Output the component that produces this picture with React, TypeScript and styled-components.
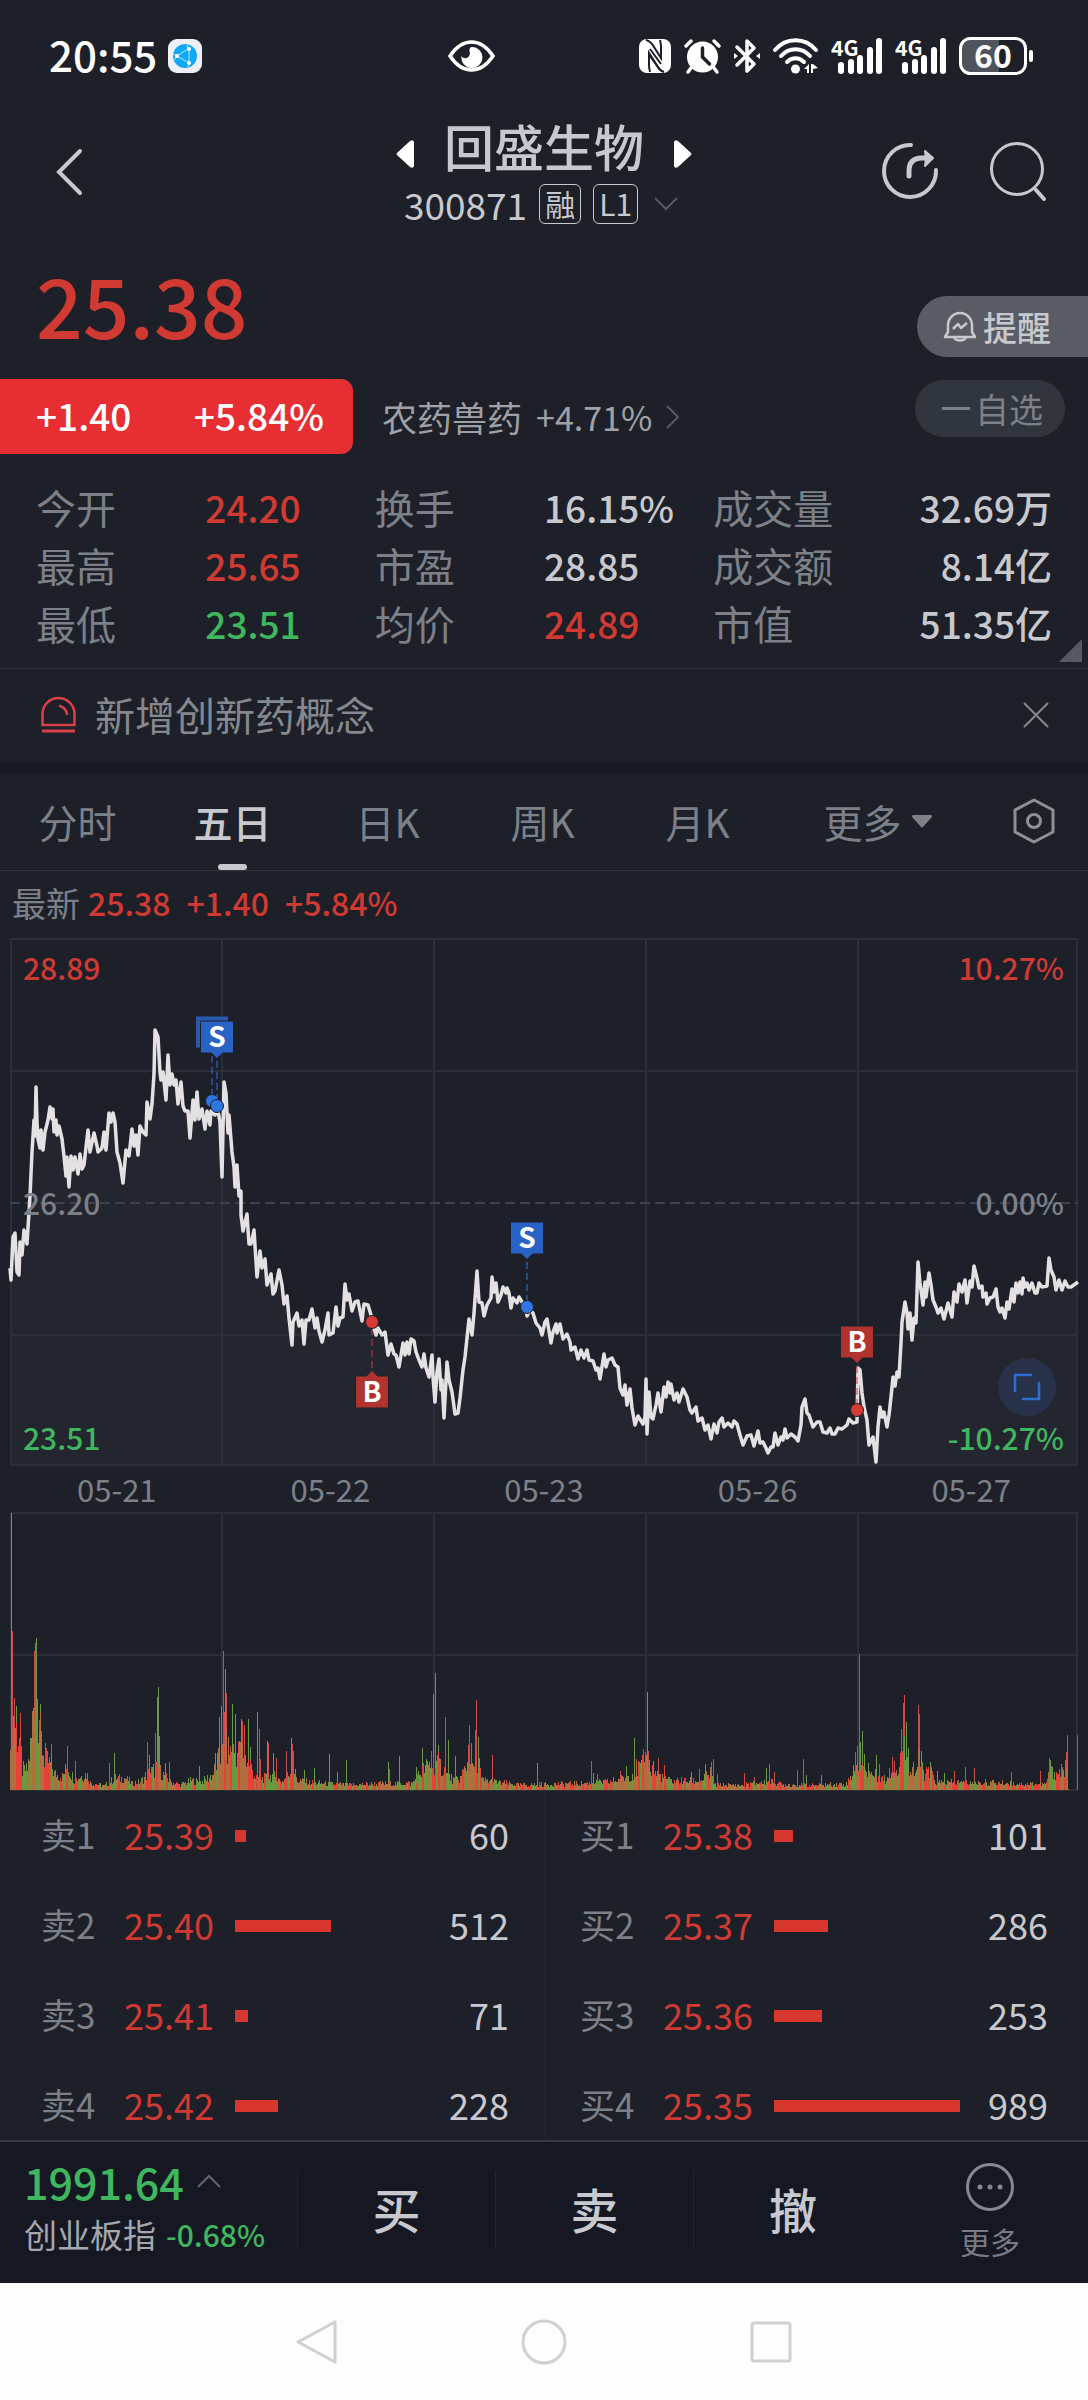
import React, { useCallback, useState } from "react";
import styled, { createGlobalStyle, css } from "styled-components";

const colors = {
  page: "#1d2028",
  band: "#181b26",
  bar: "#151823",
  line: "#2b2f39",
  text: "#c8c9ce",
  muted: "#7c8088",
  red: "#d03a33",
  green: "#3fb75e",
  blue: "#2a63c6",
};

const GlobalStyle = createGlobalStyle`
  * {
    box-sizing: border-box;
  }

  body {
    margin: 0;
    background: ${colors.page};
    color: ${colors.text};
    font-family: "Noto Sans CJK SC", "Noto Sans", sans-serif;
  }

  button {
    margin: 0;
    padding: 0;
    border: 0;
    background: none;
    color: inherit;
    font: inherit;
    cursor: pointer;
  }

  svg {
    display: block;
    flex: none;
    overflow: visible;
  }
`;

/* ---------- data ---------- */

type Tone = "red" | "green" | "plain";

interface Stat {
  label: string;
  value: string;
  tone: Tone;
}

const STATS: Stat[] = [
  { label: "今开", value: "24.20", tone: "red" },
  { label: "换手", value: "16.15%", tone: "plain" },
  { label: "成交量", value: "32.69万", tone: "plain" },
  { label: "最高", value: "25.65", tone: "red" },
  { label: "市盈", value: "28.85", tone: "plain" },
  { label: "成交额", value: "8.14亿", tone: "plain" },
  { label: "最低", value: "23.51", tone: "green" },
  { label: "均价", value: "24.89", tone: "red" },
  { label: "市值", value: "51.35亿", tone: "plain" },
];

const TABS = ["分时", "五日", "日K", "周K", "月K"];

const DATES = ["05-21", "05-22", "05-23", "05-26", "05-27"];

interface Order {
  label: string;
  price: string;
  size: number;
}

const ASKS: Order[] = [
  { label: "卖1", price: "25.39", size: 60 },
  { label: "卖2", price: "25.40", size: 512 },
  { label: "卖3", price: "25.41", size: 71 },
  { label: "卖4", price: "25.42", size: 228 },
];

const BIDS: Order[] = [
  { label: "买1", price: "25.38", size: 101 },
  { label: "买2", price: "25.37", size: 286 },
  { label: "买3", price: "25.36", size: 253 },
  { label: "买4", price: "25.35", size: 989 },
];

const MAX_SIZE = 989;

const PRICE_POINTS =
  "0,330 1,342 3,299 5,295 7,334 9,337 10,304 12,317 14,292 17,306 20,258 22,214 24,182 25,198 26,149 27,184 28,201 30,210 31,192 33,212 35,194 38,182 40,169 42,181 43,171 44,194 46,182 47,197 49,188 52,201 54,218 56,238 57,219 59,249 61,218 63,232 65,219 68,236 70,216 72,231 74,227 78,192 80,214 84,195 87,208 88,214 92,210 94,194 96,212 99,175 101,184 103,175 105,184 107,214 110,225 113,245 116,212 119,218 122,191 124,208 126,197 128,217 130,188 133,194 136,197 137,164 140,181 142,166 144,136 145,92 148,99 150,134 151,142 153,134 156,162 158,117 160,147 162,136 164,147 166,142 168,166 171,144 173,168 175,173 178,173 180,200 183,162 185,182 187,154 189,181 192,171 195,191 197,173 200,187 201,173 205,177 208,173 210,184 212,239 214,144 216,155 218,195 219,177 222,214 224,229 225,249 227,227 229,258 231,253 231,277 233,293 237,276 239,306 241,306 244,292 247,339 250,313 252,330 255,321 257,347 261,336 263,356 265,353 269,332 272,347 274,366 277,358 279,380 282,407 283,384 287,375 289,388 292,382 294,406 296,382 299,382 302,371 305,390 307,380 309,393 312,404 315,392 318,375 319,397 323,395 326,369 328,388 330,380 333,379 335,346 337,362 339,356 342,373 345,364 348,363 352,383 354,366 358,367 361,377 362,384 366,397 368,390 372,397 375,394 378,417 381,406 384,416 386,417 389,429 393,405 395,417 397,404 399,416 401,401 404,403 406,414 409,422 412,429 414,416 416,430 419,439 422,417 423,439 425,464 427,434 429,421 431,452 432,442 434,480 437,424 439,442 442,454 445,476 448,475 450,460 453,432 455,419 457,400 459,381 462,397 464,375 467,333 469,364 472,365 474,378 477,367 481,360 482,339 484,354 486,345 488,364 491,357 493,349 496,355 497,350 499,355 501,370 503,360 507,365 509,359 512,364 515,367 517,378 520,372 523,375 526,385 530,390 532,397 535,384 537,381 541,405 543,394 546,386 547,395 550,386 553,401 557,396 560,404 561,412 565,409 568,421 571,412 574,420 577,412 579,422 583,423 586,432 588,430 590,441 594,416 596,429 598,422 602,420 605,427 608,429 610,450 613,457 615,447 617,467 620,451 622,470 625,487 628,478 633,486 635,479 636,441 637,496 639,454 641,479 643,481 646,467 648,455 651,474 654,449 656,459 658,444 660,455 661,446 664,462 667,455 669,464 673,451 677,459 680,472 682,475 686,469 688,483 692,480 695,492 698,487 701,501 704,486 707,495 709,484 712,480 714,489 718,485 722,489 724,483 727,486 730,497 733,507 737,498 741,497 744,508 748,493 750,505 753,504 756,510 758,515 761,509 763,509 765,495 768,507 771,499 773,502 775,491 777,500 781,496 785,499 788,503 791,487 792,469 795,461 797,475 799,477 803,489 807,484 810,484 813,494 817,495 820,490 822,496 825,496 828,490 832,491 837,487 839,481 843,485 847,484 848,430 850,432 852,455 854,469 857,482 859,507 863,499 866,524 868,489 870,469 872,479 874,474 877,489 879,477 881,459 883,439 885,448 887,434 889,439 891,405 892,384 895,364 897,375 898,391 900,375 902,402 904,380 906,385 908,324 910,345 913,367 915,344 916,359 919,335 921,347 923,362 926,369 928,375 931,370 934,381 938,365 940,372 942,379 944,354 947,364 949,346 952,354 955,342 957,365 960,343 962,349 964,328 967,340 969,350 972,348 973,359 976,355 977,366 980,360 983,359 986,351 988,369 990,374 992,370 995,380 997,364 999,371 1002,351 1004,364 1006,345 1008,355 1010,344 1012,356 1013,340 1015,349 1017,345 1019,352 1022,345 1025,355 1027,355 1029,345 1032,349 1037,348 1039,320 1041,332 1044,339 1046,352 1049,342 1052,352 1055,343 1058,349 1061,349 1068,344";

// usual volume level along the time axis: [x, height]
const VOLUME_BASE = [
  [0, 88], [4, 85], [7, 66], [10, 58], [12, 24], [17, 24], [21, 60], [24, 130], [27, 90], [30, 66],
  [34, 38], [41, 30], [44, 20], [52, 16], [57, 28], [64, 12], [76, 20], [80, 9], [94, 5], [104, 14],
  [115, 14], [122, 8], [130, 10], [136, 18], [146, 26], [152, 20], [160, 10], [170, 6], [180, 11],
  [192, 10], [202, 18], [208, 36], [216, 50], [222, 46], [232, 44], [240, 30], [245, 15], [254, 14],
  [262, 18], [272, 10], [283, 26], [287, 12], [300, 9], [340, 6], [380, 8], [402, 8], [412, 24],
  [421, 32], [428, 32], [437, 18], [443, 12], [450, 14], [456, 30], [461, 40], [464, 20], [468, 44],
  [471, 12], [490, 9], [510, 6], [540, 7], [570, 8], [600, 10], [612, 13], [625, 22], [636, 34],
  [645, 20], [660, 11], [690, 11], [700, 20], [704, 6], [730, 6], [760, 10], [770, 7], [800, 6],
  [836, 7], [844, 24], [852, 26], [864, 18], [876, 12], [884, 26], [888, 24], [892, 56], [897, 34],
  [904, 18], [909, 36], [914, 20], [921, 20], [926, 9], [980, 9], [1000, 8], [1035, 7], [1040, 22],
  [1050, 20], [1057, 28], [1058, 1], [1068, 0],
];

const GREEN_SPIKES = [
  [1, 277], [6, 84], [26, 152], [27, 91], [30, 86], [104, 37], [139, 35], [147, 93], [148, 103],
  [149, 54], [155, 27], [189, 24], [205, 37], [209, 73], [211, 84], [215, 121], [222, 86], [225, 76],
  [229, 49], [231, 71], [238, 71], [240, 43], [247, 78], [257, 49], [263, 37], [281, 52], [294, 20],
  [304, 22], [319, 36], [327, 18], [336, 30], [378, 28], [389, 34], [406, 23], [412, 42], [423, 96],
  [425, 117], [428, 45], [438, 50], [445, 34], [468, 53], [527, 27], [583, 17], [603, 13],
  [616, 24], [624, 52], [637, 98], [643, 29], [681, 18], [695, 26], [756, 22], [796, 15], [811, 15],
  [843, 25], [850, 48], [852, 59], [854, 36], [858, 27], [866, 35], [896, 68], [898, 42], [911, 39],
  [920, 28], [927, 19], [934, 17], [1040, 30],
];

const RED_SPIKES = [
  [2, 159], [4, 92], [10, 77], [24, 139], [25, 147], [29, 70], [35, 47], [41, 46], [57, 44],
  [65, 29], [99, 27], [137, 48], [145, 57], [159, 28], [213, 139], [214, 78], [216, 97], [232, 69],
  [234, 65], [249, 61], [250, 31], [258, 47], [266, 32], [276, 39], [282, 46], [283, 39], [379, 21],
  [421, 39], [435, 73], [458, 45], [459, 65], [465, 60], [466, 90], [482, 35], [581, 29], [587, 16],
  [610, 19], [626, 31], [628, 29], [633, 41], [635, 38], [638, 39], [648, 32], [654, 25], [689, 21],
  [701, 28], [703, 31], [707, 16], [734, 17], [744, 13], [759, 26], [764, 18], [787, 20], [793, 31],
  [845, 38], [847, 44], [849, 136], [869, 26], [879, 22], [882, 33], [884, 29], [891, 61], [893, 87],
  [894, 95], [903, 28], [908, 85], [909, 76], [944, 19], [955, 23], [964, 22], [1001, 18],
  [1030, 19], [1039, 32], [1051, 26], [1056, 38], [1057, 55], [1067, 55],
];

const VOLUME_FLOOR = 278;

const baseVolume = (x: number) => {
  const next = VOLUME_BASE.findIndex(([px]) => px > x);
  if (next < 1) return 0;
  const [x0, h0] = VOLUME_BASE[next - 1];
  const [x1, h1] = VOLUME_BASE[next];
  return h0 + ((h1 - h0) * (x - x0)) / (x1 - x0);
};

const noise = (n: number) => {
  const v = Math.sin(n * 12.9898) * 43758.5453;
  return v - Math.floor(v);
};

const bar = (x: number, height: number) =>
  `M${x} ${VOLUME_FLOOR}v-${Math.max(1, Math.round(height))}h1v${Math.max(
    1,
    Math.round(height)
  )}z`;

const buildVolume = () => {
  const paths = { red: "", green: "", mixed: "" };
  for (let x = 0; x < 1059; x += 1) {
    const height = baseVolume(x) * (0.45 + noise(x) * 0.75);
    const pick = noise(Math.floor(x / 2) + 500);
    const key = pick < 0.3 ? "red" : pick < 0.66 ? "mixed" : "green";
    paths[key] += bar(x, height);
  }
  return paths;
};

const VOLUME = buildVolume();
const GREEN_SPIKE_PATH = GREEN_SPIKES.map(([x, h]) => bar(x, h)).join("");
const RED_SPIKE_PATH = RED_SPIKES.map(([x, h]) => bar(x, h)).join("");

/* ---------- status bar ---------- */

const Screen = styled.div`
  min-height: 100vh;
  display: flex;
  flex-direction: column;
`;

const StatusBar = styled.div`
  display: flex;
  align-items: center;
  padding: 34px 54px 0 49px;
  height: 78px;
  color: #fff;
`;

const Clock = styled.time`
  padding-bottom: 4px;
  margin-right: 11px;
  font-size: 42px;
  line-height: 44px;
  font-weight: 500;
`;

const StatusEye = styled.div`
  margin-left: 246px;
`;

const StatusIcons = styled.div`
  display: flex;
  align-items: center;
  gap: 13px;
  margin-left: auto;
`;

const BrowserIcon = () => (
  <svg width="34" height="34" viewBox="0 0 34 34">
    <rect width="34" height="34" rx="9" fill="#eef0f6" />
    <circle cx="17" cy="17" r="12" fill="#0fa8f5" />
    <path
      d="M9 17 20 10M9 17l12 7M21 10v14M5 15l4 2-3 4M20 10l-1-4M21 24l-1 4"
      stroke="#bfeaff"
      strokeWidth="1"
      fill="none"
    />
    <g fill="#fff">
      <circle cx="9" cy="17" r="2" />
      <circle cx="21" cy="10" r="2" />
      <circle cx="21" cy="24" r="2" />
    </g>
  </svg>
);

const EyeIcon = () => (
  <svg width="47" height="34" viewBox="0 0 47 34" fill="none">
    <path
      d="M2 17C8 8 15 3 23.500 3S39 8 45 17C39 26 32 31 23.500 31S8 26 2 17Z"
      stroke="#fff"
      strokeWidth="3.500"
    />
    <path
      d="M24 8a10.500 10.500 0 1 1-10.500 9c1 2 3 2.500 5 2 3-1 4-4 3-7-.4-2 .5-4 2.500-4Z"
      fill="#fff"
    />
  </svg>
);

const NfcIcon = () => (
  <svg width="32" height="34" viewBox="0 0 32 34">
    <rect width="32" height="34" rx="8" fill="#fff" />
    <path
      d="M7 1c4 1 4 2 6 4l9 14V8c0-3-.5-5-1-7M25 33c-4-1-5-3-6-5L10 14v12c0 3 .5 5 1 7"
      fill="none"
      stroke={colors.page}
      strokeWidth="2"
    />
    <path d="m11 10 11 15M11 17l10 14" stroke={colors.page} strokeWidth="2" />
  </svg>
);

const AlarmIcon = () => (
  <svg width="37" height="34" viewBox="0 0 37 34" fill="none">
    <circle cx="18.500" cy="18" r="15.500" fill="#fff" />
    <path
      d="m2 7 5-5M35 7l-5-5M7 29l-3 4M30 29l3 4"
      stroke="#fff"
      strokeWidth="3.500"
      strokeLinecap="round"
    />
    <path
      d="M18.500 9v9l7 7"
      stroke={colors.page}
      strokeWidth="3.500"
      strokeLinecap="round"
    />
  </svg>
);

const BluetoothIcon = () => (
  <svg width="26" height="36" viewBox="0 0 26 36" fill="none">
    <path
      d="m3 9 17 17-7 7V3l7 7L3 27"
      stroke="#fff"
      strokeWidth="3.500"
      strokeLinejoin="round"
      strokeLinecap="round"
    />
    <path d="m0 15 4 3-4 3zM26 15l-4 3 4 3z" fill="#fff" />
  </svg>
);

const WifiIcon = () => (
  <svg width="45" height="36" viewBox="0 0 45 36" fill="none">
    <g stroke="#fff" strokeWidth="4" strokeLinecap="round">
      <path d="M2 12C13-1 32-1 43 12" />
      <path d="M8 18c8-9 21-9 29 0" />
      <path d="M14 24c5-5 12-5 17 0" />
    </g>
    <circle cx="22.500" cy="31" r="4.500" fill="#fff" />
    <path d="m31 31 5-5v9h-2v-4zM38 26v9h2v-4l5-1-5-4z" fill="#fff" />
  </svg>
);

const SignalIcon = () => (
  <svg width="51" height="36" viewBox="0 0 51 36">
    <text
      x="0"
      y="18"
      fill="#fff"
      fontFamily="Noto Sans CJK SC, sans-serif"
      fontSize="21"
      fontWeight="700"
    >
      4G
    </text>
    <g fill="#fff">
      <rect x="7" y="24" width="6" height="12" rx="3" />
      <rect x="17" y="21" width="6" height="15" rx="3" />
      <rect x="26" y="17" width="6" height="19" rx="3" />
      <rect x="36" y="9" width="6" height="27" rx="3" />
      <rect x="45" y="0" width="6" height="36" rx="3" />
    </g>
  </svg>
);

const BatteryIcon = () => (
  <svg width="75" height="38" viewBox="0 0 75 38">
    <path d="M10 2h30v34H10a8 8 0 0 1-8-8V10a8 8 0 0 1 8-8Z" fill="#50535b" />
    <rect
      x="1.500"
      y="1.500"
      width="65"
      height="35"
      rx="10"
      fill="none"
      stroke="#fff"
      strokeWidth="3"
    />
    <rect x="70" y="13" width="4" height="12" rx="2" fill="#fff" />
    <text
      x="34"
      y="31"
      textAnchor="middle"
      fill="#fff"
      fontFamily="Noto Sans CJK SC, sans-serif"
      fontSize="32"
      fontWeight="700"
    >
      60
    </text>
  </svg>
);

/* ---------- header ---------- */

const Header = styled.header`
  display: grid;
  grid-template-columns: 1fr auto 1fr;
  align-items: center;
  padding: 37px 42px 0;
`;

const BackButton = styled.button`
  justify-self: start;
  padding: 2px 14px 0;
`;

const HeaderCenter = styled.div`
  display: flex;
  flex-direction: column;
  align-items: center;
  gap: 7px;
`;

const TitleRow = styled.div`
  display: flex;
  align-items: center;
  gap: 30px;
`;

const Title = styled.h1`
  margin: 0;
  font-size: 50px;
  line-height: 60px;
  font-weight: 500;
`;

const StepButton = styled.button`
  padding-top: 18px;
`;

const CodeRow = styled.div`
  display: flex;
  align-items: center;
  gap: 12px;
  height: 44px;
  padding-right: 6px;
  font-size: 37px;
`;

const CodeBadge = styled.span`
  height: 40px;
  padding: 0 5px;
  border: 1px solid ${colors.text};
  border-radius: 6px;
  font-size: 30px;
  line-height: 36px;
`;

const ExpandButton = styled.button`
  padding-left: 4px;
`;

const HeaderActions = styled.div`
  display: flex;
  justify-content: flex-end;
  align-items: center;
  gap: 52px;
`;

/* ---------- quote ---------- */

const Quote = styled.section`
  padding: 36px 0 16px;
  border-bottom: 1px solid ${colors.line};
  position: relative;
`;

const QuoteTop = styled.div`
  display: flex;
  justify-content: space-between;
`;

const Price = styled.div`
  padding-left: 36px;
  color: ${colors.red};
  font-size: 82px;
  line-height: 84px;
  font-weight: 500;
`;

const ChangeRow = styled.div`
  display: flex;
  align-items: center;
  margin-top: 33px;
`;

const ChangeBadge = styled.div`
  display: flex;
  justify-content: space-between;
  width: 353px;
  height: 75px;
  padding: 0 29px 0 36px;
  border-radius: 0 12px 12px 0;
  background: #e62e33;
  color: #fff;
  font-size: 37px;
  line-height: 72px;
  font-weight: 500;
`;

const Sector = styled.a`
  display: flex;
  align-items: center;
  gap: 14px;
  margin-left: 29px;
  color: #a0a1a6;
  font-size: 35px;
  line-height: 70px;
  text-decoration: none;
`;

const SectorChange = styled.span`
  font-size: 34px;
`;

const Pills = styled.div`
  display: flex;
  flex-direction: column;
  align-items: flex-end;
  gap: 23px;
  padding-top: 34px;
`;

const pill = css`
  display: flex;
  align-items: center;
  font-size: 34px;
`;

const AlertPill = styled.button`
  ${pill}
  gap: 7px;
  height: 61px;
  padding: 0 37px 0 27px;
  border-radius: 31px 0 0 31px;
  background: #5a5c65;
  font-weight: 500;
`;

const WatchPill = styled.button`
  ${pill}
  gap: 5px;
  height: 57px;
  margin-right: 23px;
  padding: 0 22px 0 27px;
  border-radius: 29px;
  background: #31353d;
  color: ${colors.muted};
`;

const StatGrid = styled.dl`
  display: grid;
  grid-template-columns: repeat(3, 1fr);
  margin: 24px 36px 0;
`;

const StatItem = styled.div`
  display: grid;
  grid-template-columns: 1fr 1fr;
  line-height: 58px;

  &:nth-child(3n) dd {
    text-align: right;
  }
`;

const StatLabel = styled.dt`
  color: ${colors.muted};
  font-size: 40px;
`;

const toneColor = { red: colors.red, green: colors.green, plain: colors.text };

const StatValue = styled.dd<{ $tone: Tone }>`
  margin: 0;
  color: ${({ $tone }) => toneColor[$tone]};
  font-size: 37px;
  font-weight: 500;
  white-space: nowrap;
`;

const Corner = styled.svg`
  position: absolute;
  right: 6px;
  bottom: 6px;
`;

const Notice = styled.section`
  display: flex;
  align-items: center;
  height: 92px;
  padding: 0 39px 0 41px;
  color: #85888f;
  font-size: 40px;
`;

const NoticeText = styled.p`
  flex: 1;
  margin: 0 0 2px 19px;
  line-height: 56px;
`;

const Band = styled.div`
  height: 14px;
  background: ${colors.band};
`;

/* ---------- tabs ---------- */

const Tabs = styled.nav`
  display: grid;
  grid-template-columns: repeat(5, 155fr) 205fr 108fr;
  height: 96px;
  border-bottom: 1px solid #313640;
`;

const Tab = styled.button<{ $active?: boolean }>`
  position: relative;
  display: flex;
  align-items: center;
  justify-content: center;
  gap: 10px;
  padding-bottom: 3px;
  color: ${({ $active }) => ($active ? colors.text : colors.muted)};
  font-size: 39px;
  font-weight: ${({ $active }) => ($active ? 500 : 400)};

  ${({ $active }) =>
    $active &&
    css`
      &::after {
        content: "";
        position: absolute;
        bottom: 0;
        width: 29px;
        height: 6px;
        border-radius: 3px;
        background: ${colors.text};
      }
    `}
`;

const Latest = styled.div`
  display: flex;
  align-items: center;
  gap: 16px;
  height: 67px;
  padding: 0 12px 5px;
  color: ${colors.red};
  font-size: 32px;
  font-weight: 500;
`;

const LatestLabel = styled.span`
  margin-right: -8px;
  color: ${colors.muted};
  font-size: 34px;
  font-weight: 400;
`;

/* ---------- charts ---------- */

const ChartArea = styled.section`
  padding: 0 10px;
`;

const PriceChart = styled.div`
  position: relative;
`;

const ChartSvg = styled.svg`
  width: 100%;
  height: auto;
`;

const AxisLabels = styled.div`
  position: absolute;
  inset: 9px 14px 9px 13px;
  display: grid;
  grid-template-columns: 1fr 1fr;
  align-content: space-between;
  font-size: 30px;
  line-height: 40px;
  font-weight: 500;
  pointer-events: none;
`;

const AxisLabel = styled.span<{ $color: string }>`
  color: ${({ $color }) => $color};

  &:nth-child(even) {
    text-align: right;
  }
`;

const FullscreenButton = styled.button`
  position: absolute;
  right: 22px;
  bottom: 50px;
`;

const DateRow = styled.div`
  display: grid;
  grid-template-columns: repeat(5, 1fr);
  color: ${colors.muted};
  font-size: 31px;
  line-height: 46px;
  text-align: center;
`;

/* ---------- order book ---------- */

const Book = styled.section`
  display: grid;
  grid-template-columns: 1fr 1fr;
`;

const BookSide = styled.div<{ $side: "ask" | "bid" }>`
  padding: ${({ $side }) => ($side === "ask" ? "0 35px 0 41px" : "0 40px 0 35px")};
  border-left: ${({ $side }) => ($side === "bid" ? "1px solid #21262e" : "0")};
`;

const BookTable = styled.table`
  width: 100%;
  table-layout: fixed;
  border-collapse: collapse;
  font-size: 36px;
  line-height: 58px;

  td,
  th {
    padding: 14px 0;
    text-align: left;
    vertical-align: top;
    font-weight: 400;
  }

  tr:last-child td,
  tr:last-child th {
    padding-bottom: 3px;
  }
`;

const OrderLabel = styled.th`
  width: 83px;
  color: ${colors.muted};
  font-size: 35px;
`;

const OrderPrice = styled.td`
  width: 111px;
  color: ${colors.red};
`;

const OrderSize = styled.td`
  width: 80px;

  && {
    text-align: right;
  }
`;

const BarTrack = styled.div`
  display: flex;
  align-items: center;
  height: 62px;
`;

const Bar = styled.div`
  height: 12px;
  background: #d8372f;
`;

/* ---------- bottom ---------- */

const TradeBar = styled.footer`
  display: grid;
  grid-template-columns: 297fr 198fr 198fr 199fr 196fr;
  height: 143px;
  border-top: 2px solid #343944;
  background: ${colors.bar};
`;

const IndexBlock = styled.a`
  display: flex;
  flex-direction: column;
  gap: 7px;
  padding: 13px 0 0 24px;
  color: ${colors.green};
  text-decoration: none;
`;

const IndexValue = styled.div`
  display: flex;
  align-items: center;
  gap: 13px;
  font-size: 43px;
  line-height: 52px;
  font-weight: 500;
`;

const IndexName = styled.div`
  display: flex;
  gap: 10px;
  font-size: 30px;
  line-height: 40px;
  font-weight: 500;
`;

const IndexLabel = styled.span`
  color: #a6a7ac;
  font-size: 33px;
  font-weight: 400;
`;

const TradeButton = styled.button`
  margin: 29px 0 33px;
  padding-bottom: 6px;
  border-left: 1px solid #20242f;
  font-size: 48px;
  line-height: 70px;
  font-weight: 500;
`;

const MoreButton = styled.button`
  display: flex;
  flex-direction: column;
  align-items: center;
  gap: 10px;
  padding-top: 21px;
  color: #787b85;
  font-size: 30px;
  line-height: 40px;
`;

const SystemNav = styled.nav`
  display: flex;
  align-items: center;
  justify-content: center;
  gap: 181px;
  min-height: 117px;
  flex: 1;
  background: #fdfdfd;
`;

/* ---------- parts ---------- */

interface MarkerProps {
  letter: "S" | "B";
  x: number;
  y: number;
  dotY: number;
  ghost?: boolean;
}

// y is the top of the flag, the pointer faces the dot
const Marker = ({ letter, x, y, dotY, ghost }: MarkerProps) => {
  const isSell = letter === "S";
  const below = y > dotY;
  const fill = isSell ? colors.blue : "#b03330";
  const dot = isSell ? "#2f76e2" : "#d63a35";
  return (
    <g>
      <line
        x1={x}
        x2={x}
        y1={below ? y - 8 : y + 40}
        y2={below ? dotY + 8 : dotY - 6}
        stroke={dot}
        strokeDasharray="7 4"
      />
      <circle cx={x} cy={dotY} r="6.500" fill={dot} stroke={colors.page} />
      <g opacity={ghost ? 0.85 : 1}>
        <rect
          x={x - 16.500}
          y={y}
          width="33"
          height="32"
          rx="1"
          fill={fill}
          stroke={colors.page}
          strokeWidth="1"
        />
        <path
          d={
            below
              ? `M${x - 6} ${y + 1}l6-6 6 6z`
              : `M${x - 6} ${y + 31}l6 6 6-6z`
          }
          fill={fill}
        />
        <text
          x={x}
          y={y + 25.500}
          textAnchor="middle"
          fill="#fff"
          opacity={ghost ? 0.3 : 1}
          fontFamily="Noto Sans CJK SC, sans-serif"
          fontSize="28"
          fontWeight="700"
        >
          {letter}
        </text>
      </g>
    </g>
  );
};

const PriceLines = () => (
  <ChartSvg viewBox="0 0 1068 528">
    <path
      d={`M${PRICE_POINTS.split(" ").join("L")}L1068,527L0,527Z`}
      fill="#24262f"
    />
    <g stroke={colors.line} strokeWidth="2" fill="none">
      <rect x="1" y="1" width="1066" height="526" />
      <path d="M0 133H1068M0 397H1068M212 0V528M424 0V528M636 0V528M848 0V528" />
    </g>
    <line
      x2="1068"
      y1="265"
      y2="265"
      stroke="#3b424e"
      strokeWidth="2"
      strokeDasharray="10 5"
    />
    <polyline
      points={PRICE_POINTS}
      fill="none"
      stroke="#e4e1e3"
      strokeWidth="3.500"
      strokeLinejoin="round"
    />
    <Marker letter="S" x={202} y={78} dotY={163} ghost />
    <Marker letter="S" x={207} y={83} dotY={168} />
    <Marker letter="B" x={362} y={438} dotY={384} />
    <Marker letter="S" x={517} y={284} dotY={369} />
    <Marker letter="B" x={847} y={388} dotY={472} />
  </ChartSvg>
);

const VolumeBars = () => (
  <ChartSvg viewBox="0 0 1068 279" shapeRendering="crispEdges">
    <path
      d="M0 1H1068M0 143H1068M1 0V278M212 0V278M424 0V278M636 0V278M848 0V278M1067 0V278M0 278H1068"
      stroke={colors.line}
      strokeWidth="2"
    />
    <path d={GREEN_SPIKE_PATH} fill="#6a9a45" />
    <path d={RED_SPIKE_PATH} fill="#d04b47" />
    <path d={VOLUME.mixed} fill="#b06f3e" />
    <path d={VOLUME.green} fill="#6a983c" />
    <path d={VOLUME.red} fill="#e8413a" />
  </ChartSvg>
);

const OrderTable = ({ orders }: { orders: Order[] }) => (
  <BookTable>
    <tbody>
      {orders.map(({ label, price, size }) => (
        <tr key={label}>
          <OrderLabel scope="row">{label}</OrderLabel>
          <OrderPrice>{price}</OrderPrice>
          <td>
            <BarTrack>
              <Bar style={{ width: `${(size / MAX_SIZE) * 96}%` }} />
            </BarTrack>
          </td>
          <OrderSize>{size}</OrderSize>
        </tr>
      ))}
    </tbody>
  </BookTable>
);

const App = () => {
  const [activeTab, setActiveTab] = useState("五日");
  const [showNotice, setShowNotice] = useState(true);

  const handleNoticeClose = useCallback(() => {
    setShowNotice(false);
  }, []);

  return (
    <Screen>
      <GlobalStyle />
      <StatusBar>
        <Clock>20:55</Clock>
        <BrowserIcon />
        <StatusEye>
          <EyeIcon />
        </StatusEye>
        <StatusIcons>
          <NfcIcon />
          <AlarmIcon />
          <BluetoothIcon />
          <WifiIcon />
          <SignalIcon />
          <SignalIcon />
          <BatteryIcon />
        </StatusIcons>
      </StatusBar>

      <Header>
        <BackButton aria-label="返回">
          <svg width="28" height="46" viewBox="0 0 28 46" fill="none">
            <path
              d="M24 2 3 23l21 21"
              stroke={colors.text}
              strokeWidth="4"
              strokeLinecap="round"
            />
          </svg>
        </BackButton>
        <HeaderCenter>
          <TitleRow>
            <StepButton aria-label="上一只">
              <svg width="18" height="28" viewBox="0 0 18 28">
                <path d="M18 2v24q-1 3-4 1L1 15q-1-1 0-2L14 1q3-2 4 1Z" fill="#fff" />
              </svg>
            </StepButton>
            <Title>回盛生物</Title>
            <StepButton aria-label="下一只">
              <svg width="18" height="28" viewBox="0 0 18 28">
                <path d="M0 2v24q1 3 4 1l13-12q1-1 0-2L4 1Q1-1 0 2Z" fill="#fff" />
              </svg>
            </StepButton>
          </TitleRow>
          <CodeRow>
            <span>300871</span>
            <CodeBadge>融</CodeBadge>
            <CodeBadge>L1</CodeBadge>
            <ExpandButton aria-label="展开">
              <svg width="24" height="14" viewBox="0 0 24 14" fill="none">
                <path d="m1 1 11 11L23 1" stroke="#555962" strokeWidth="2" />
              </svg>
            </ExpandButton>
          </CodeRow>
        </HeaderCenter>
        <HeaderActions>
          <button aria-label="分享">
            <svg width="56" height="58" viewBox="0 0 56 58" fill="none">
              <g stroke={colors.text} strokeWidth="4" strokeLinecap="round">
                <path d="M29 3A26 26 0 1 0 54 28" />
                <path d="M27 34v-5c0-9 5-13 13-13h8" strokeWidth="5" />
              </g>
              <path
                d="m43 9 8 7-8 8 1-8Z"
                fill={colors.text}
                stroke={colors.text}
                strokeWidth="2"
                strokeLinejoin="round"
              />
            </svg>
          </button>
          <button aria-label="搜索">
            <svg width="56" height="60" viewBox="0 0 56 60" fill="none">
              <g stroke={colors.text} strokeWidth="3" strokeLinecap="round">
                <circle cx="27" cy="28" r="25.500" />
                <path d="m46 49 8 9" strokeWidth="4" />
              </g>
            </svg>
          </button>
        </HeaderActions>
      </Header>

      <Quote>
        <QuoteTop>
          <div>
            <Price>25.38</Price>
            <ChangeRow>
              <ChangeBadge>
                <span>+1.40</span>
                <span>+5.84%</span>
              </ChangeBadge>
              <Sector href="#sector">
                农药兽药
                <SectorChange>+4.71%</SectorChange>
                <svg width="14" height="24" viewBox="0 0 14 24" fill="none">
                  <path d="m1 1 11 11L1 23" stroke="#555962" strokeWidth="2" />
                </svg>
              </Sector>
            </ChangeRow>
          </div>
          <Pills>
            <AlertPill>
              <svg width="32" height="34" viewBox="0 0 32 34" fill="none">
                <g stroke={colors.text} strokeWidth="2.500" strokeLinejoin="round">
                  <path d="M4 22V15a12 12 0 0 1 24 0v7l3 5H1l3-5Z" />
                  <path d="M10 28a7 5 0 0 0 12 0" />
                  <path d="m9 19 5-5 3 4 6-5" />
                </g>
              </svg>
              提醒
            </AlertPill>
            <WatchPill>
              <svg width="28" height="4" viewBox="0 0 28 4">
                <rect width="28" height="3" fill={colors.muted} />
              </svg>
              自选
            </WatchPill>
          </Pills>
        </QuoteTop>
        <StatGrid>
          {STATS.map(({ label, value, tone }) => (
            <StatItem key={label}>
              <StatLabel>{label}</StatLabel>
              <StatValue $tone={tone}>{value}</StatValue>
            </StatItem>
          ))}
        </StatGrid>
        <Corner width="23" height="23" viewBox="0 0 23 23">
          <path d="M23 0v23H0z" fill="#565963" />
        </Corner>
      </Quote>

      {showNotice && (
        <Notice>
          <svg width="35" height="36" viewBox="0 0 35 36" fill="none">
            <g stroke="#d9404a" strokeWidth="2.500">
              <path d="M1.500 28V17a16 16 0 0 1 32 0v11Z" />
              <path d="M1 34h33" strokeWidth="3" />
              <path d="M19 9q6 2 7 8" strokeLinecap="round" />
            </g>
          </svg>
          <NoticeText>新增创新药概念</NoticeText>
          <button aria-label="关闭" onClick={handleNoticeClose}>
            <svg width="26" height="26" viewBox="0 0 26 26">
              <path d="m1 1 24 24M25 1 1 25" stroke="#85888f" strokeWidth="2" />
            </svg>
          </button>
        </Notice>
      )}
      <Band />

      <Tabs>
        {TABS.map((tab) => (
          <Tab
            key={tab}
            $active={tab === activeTab}
            onClick={() => setActiveTab(tab)}
          >
            {tab}
          </Tab>
        ))}
        <Tab>
          更多
          <svg width="20" height="13" viewBox="0 0 20 13">
            <path d="M1 0h18q2 1 0 3l-8 9q-1 1-2 0L1 3Q-1 1 1 0Z" fill={colors.muted} />
          </svg>
        </Tab>
        <Tab aria-label="设置">
          <svg width="42" height="46" viewBox="0 0 42 46" fill="none">
            <g stroke="#8d9097" strokeWidth="3" strokeLinejoin="round">
              <path d="M21 2 40 12v22L21 44 2 34V12Z" />
              <circle cx="21" cy="23" r="6.500" />
            </g>
          </svg>
        </Tab>
      </Tabs>

      <Latest>
        <LatestLabel>最新</LatestLabel>
        <span>25.38</span>
        <span>+1.40</span>
        <span>+5.84%</span>
      </Latest>

      <ChartArea>
        <PriceChart>
          <PriceLines />
          <AxisLabels>
            <AxisLabel $color={colors.red}>28.89</AxisLabel>
            <AxisLabel $color={colors.red}>10.27%</AxisLabel>
            <AxisLabel $color={colors.muted}>26.20</AxisLabel>
            <AxisLabel $color={colors.muted}>0.00%</AxisLabel>
            <AxisLabel $color={colors.green}>23.51</AxisLabel>
            <AxisLabel $color={colors.green}>-10.27%</AxisLabel>
          </AxisLabels>
          <FullscreenButton aria-label="全屏">
            <svg width="58" height="58" viewBox="0 0 58 58" fill="none">
              <circle cx="29" cy="29" r="29" fill="#27314a" />
              <path
                d="M17 33V17h16M41 25v16H25"
                stroke="#2f6fd0"
                strokeWidth="2.500"
                strokeLinecap="round"
              />
            </svg>
          </FullscreenButton>
        </PriceChart>
        <DateRow>
          {DATES.map((date) => (
            <span key={date}>{date}</span>
          ))}
        </DateRow>
        <VolumeBars />
      </ChartArea>

      <Book>
        <BookSide $side="ask">
          <OrderTable orders={ASKS} />
        </BookSide>
        <BookSide $side="bid">
          <OrderTable orders={BIDS} />
        </BookSide>
      </Book>

      <TradeBar>
        <IndexBlock href="#index">
          <IndexValue>
            1991.64
            <svg width="24" height="14" viewBox="0 0 24 14" fill="none">
              <path d="M1 13 12 2l11 11" stroke="#62656e" strokeWidth="2" />
            </svg>
          </IndexValue>
          <IndexName>
            <IndexLabel>创业板指</IndexLabel>
            <span>-0.68%</span>
          </IndexName>
        </IndexBlock>
        <TradeButton>买</TradeButton>
        <TradeButton>卖</TradeButton>
        <TradeButton>撤</TradeButton>
        <MoreButton>
          <svg width="48" height="48" viewBox="0 0 48 48" fill="none">
            <circle cx="24" cy="24" r="22.500" stroke="#858892" strokeWidth="3" />
            <g fill="#858892">
              <circle cx="14" cy="24" r="2.500" />
              <circle cx="24" cy="24" r="2.500" />
              <circle cx="34" cy="24" r="2.500" />
            </g>
          </svg>
          更多
        </MoreButton>
      </TradeBar>

      <SystemNav>
        <button aria-label="后退">
          <svg width="46" height="46" viewBox="0 0 46 46" fill="none">
            <path
              d="M41 3v40L4 23Z"
              stroke="#d0d0d0"
              strokeWidth="3"
              strokeLinejoin="round"
            />
          </svg>
        </button>
        <button aria-label="主屏幕">
          <svg width="46" height="46" viewBox="0 0 46 46" fill="none">
            <circle cx="23" cy="23" r="21" stroke="#d0d0d0" strokeWidth="3" />
          </svg>
        </button>
        <button aria-label="最近任务">
          <svg width="46" height="46" viewBox="0 0 46 46" fill="none">
            <rect
              x="4"
              y="4"
              width="38"
              height="38"
              rx="2"
              stroke="#d0d0d0"
              strokeWidth="3"
            />
          </svg>
        </button>
      </SystemNav>
    </Screen>
  );
};

export default App;
